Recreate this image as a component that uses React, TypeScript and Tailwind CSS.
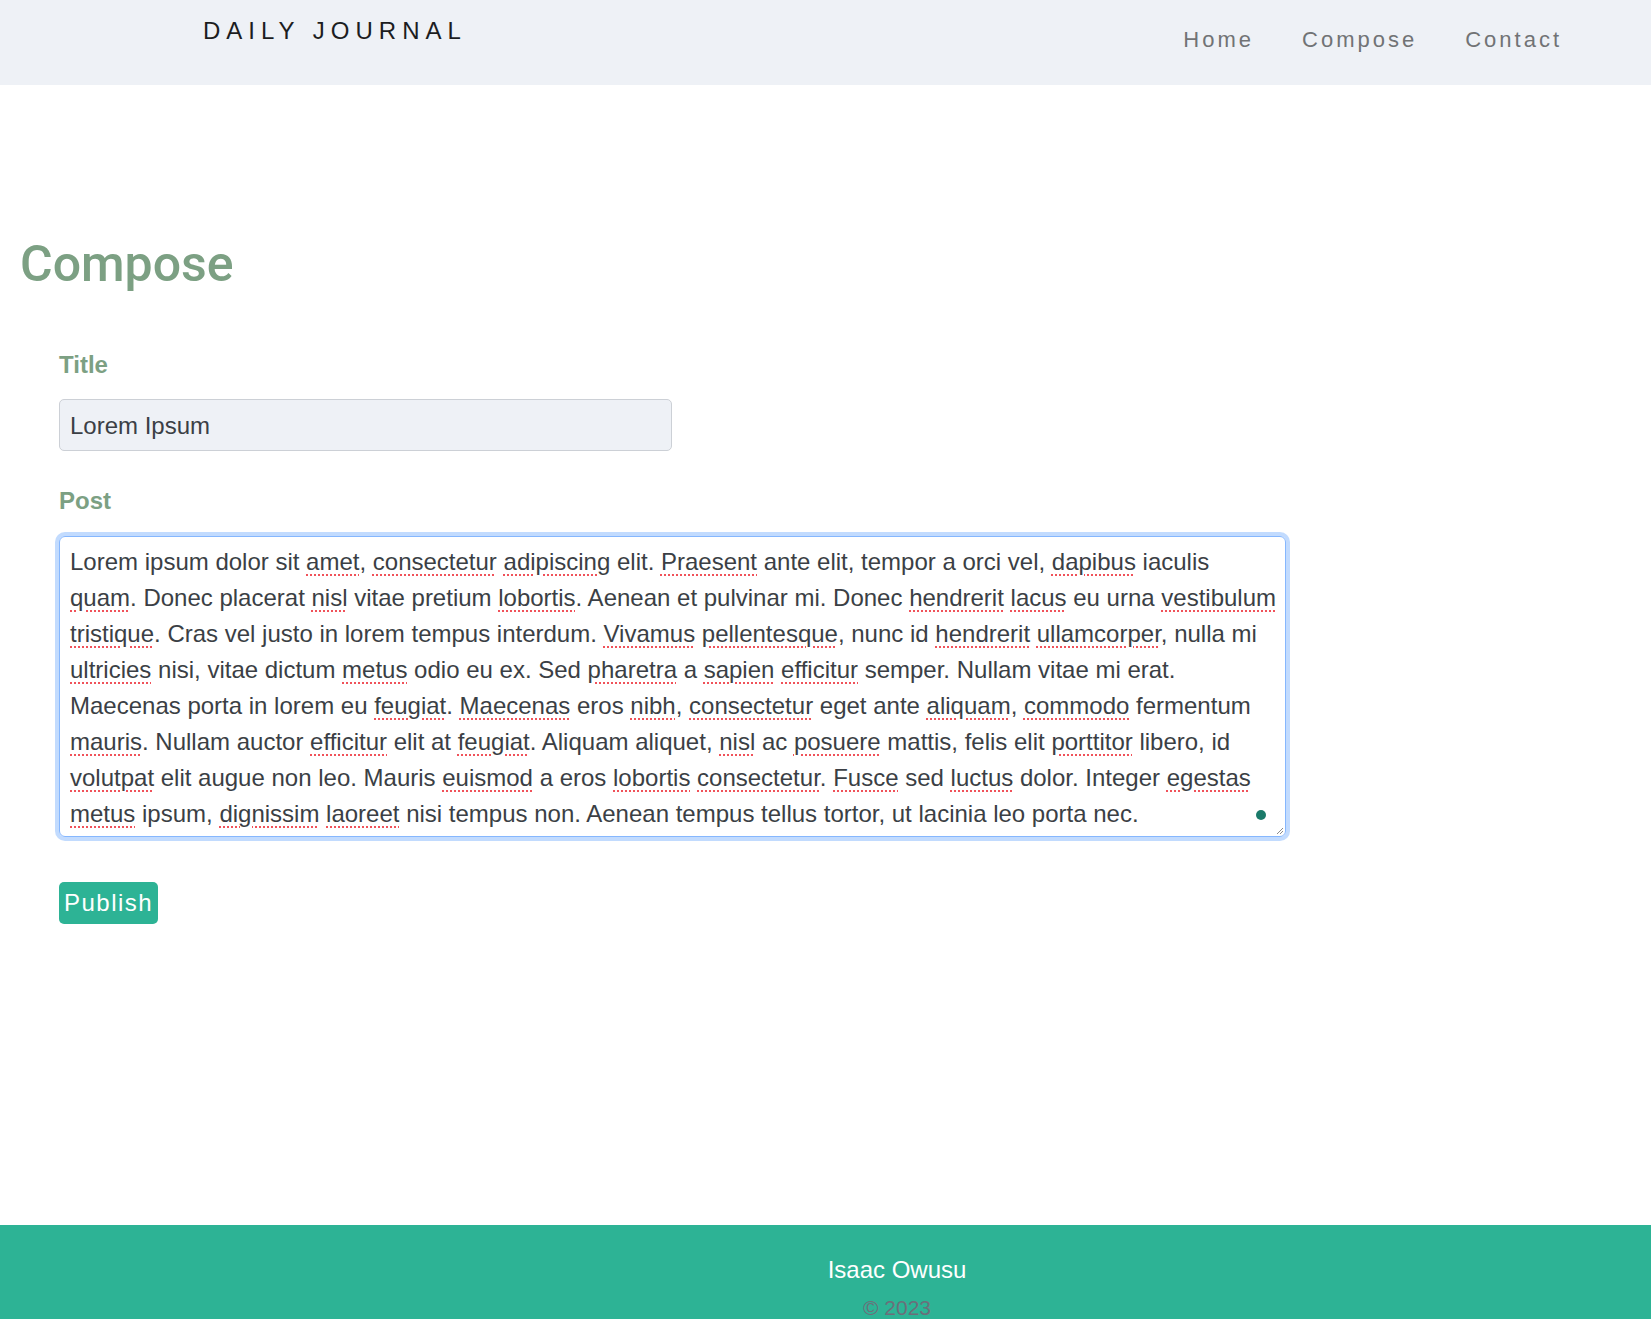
const post =
  "Lorem ipsum dolor sit *amet*, *consectetur* *adipiscing* elit. *Praesent* ante elit, tempor a orci vel, *dapibus* iaculis *quam*. Donec placerat *nisl* vitae pretium *lobortis*. Aenean et pulvinar mi. Donec *hendrerit* *lacus* eu urna *vestibulum* *tristique*. Cras vel justo in lorem tempus interdum. *Vivamus* *pellentesque*, nunc id *hendrerit* *ullamcorper*, nulla mi *ultricies* nisi, vitae dictum *metus* odio eu ex. Sed *pharetra* a *sapien* *efficitur* semper. Nullam vitae mi erat. Maecenas porta in lorem eu *feugiat*. *Maecenas* eros *nibh*, *consectetur* eget ante *aliquam*, *commodo* fermentum *mauris*. Nullam auctor *efficitur* elit at *feugiat*. Aliquam aliquet, *nisl* ac *posuere* mattis, felis elit *porttitor* libero, id *volutpat* elit augue non leo. Mauris *euismod* a eros *lobortis* *consectetur*. *Fusce* sed *luctus* dolor. Integer *egestas* *metus* ipsum, *dignissim* *laoreet* nisi tempus non. Aenean tempus tellus tortor, ut lacinia leo porta nec.";

const navLinks = ["Home", "Compose", "Contact"];

function PostBody() {
  // words wrapped in *..* get the spellcheck squiggle
  const parts = post.split(/(\*[^*]+\*)/);
  return (
    <>
      {parts.map((p, i) =>
        p.startsWith("*") ? (
          <span
            key={i}
            className="underline decoration-dotted decoration-[#f0525a] decoration-2 underline-offset-[4px]"
          >
            {p.slice(1, -1)}
          </span>
        ) : (
          <span key={i}>{p}</span>
        )
      )}
    </>
  );
}

export default function App() {
  return (
    <div className="min-h-screen bg-white font-['Liberation_Sans',Arial,sans-serif] text-[#212529]">
      <nav className="flex h-[85px] items-start justify-between bg-[#eef1f6] pl-[203px] pr-[65px]">
        <a className="pt-[13px] text-[24px] leading-[36px] tracking-[6px] text-[#1c1d1f]">DAILY JOURNAL</a>
        <ul className="flex pt-[23px]">
          {navLinks.map((l) => (
            <li key={l}>
              <a className="px-[24px] text-[22px] leading-[33px] tracking-[3px] text-[#717375]">{l}</a>
            </li>
          ))}
        </ul>
      </nav>

      <main className="pb-[301px]">
        <h1 className="mt-[149px] pl-[20px] font-['Roboto',sans-serif] text-[50px] font-medium leading-[60px] text-[#7ca083]">
          Compose
        </h1>

        <form className="mt-[53px] pl-[59px]">
          <div>
            <label className="block text-[24px] font-bold leading-[36px] text-[#7ca083]">Title</label>
            <div className="mt-[16px] flex h-[52px] w-[613px] items-center rounded-[5px] border border-[#ccd0d6] bg-[#eef1f6] px-[10px] pt-[2px] text-[24px] leading-[36px] text-[#3b3f45]">
              Lorem Ipsum
            </div>
          </div>

          <div className="mt-[32px]">
            <label className="block text-[24px] font-bold leading-[36px] text-[#7ca083]">Post</label>
            <div className="relative mt-[17px] h-[301px] w-[1227px] overflow-hidden rounded-[6px] border border-[#86b7fe] pl-[10px] pr-[7px] pt-[7px] text-[24px] leading-[36px] text-[#3b3f45] shadow-[0_0_0_4px_rgba(13,110,253,0.25)]">
              <PostBody />
              <span className="absolute left-[1196px] top-[273px] h-[10px] w-[10px] rounded-full bg-[#1b7a6a]" />
              <svg className="absolute bottom-[1px] right-[1px]" width="9" height="9" viewBox="0 0 9 9">
                <path d="M8 2 L2 8 M8 5 L5 8" stroke="#8a8a8a" strokeWidth="1" />
              </svg>
            </div>
          </div>

          <button
            type="button"
            className="mt-[45px] h-[42px] rounded-[5px] bg-[#2db395] px-[5px] text-[24px] leading-[36px] tracking-[1.5px] text-white"
          >
            Publish
          </button>
        </form>
      </main>

      <footer className="h-[140px] bg-[#2db395] pl-[143px] pt-[27px] text-center">
        <p className="text-[24px] leading-[36px] text-white">Isaac Owusu</p>
        <p className="mt-[5px] text-[21px] leading-[30px] text-[#6b6f7a]">© 2023</p>
      </footer>
    </div>
  );
}
